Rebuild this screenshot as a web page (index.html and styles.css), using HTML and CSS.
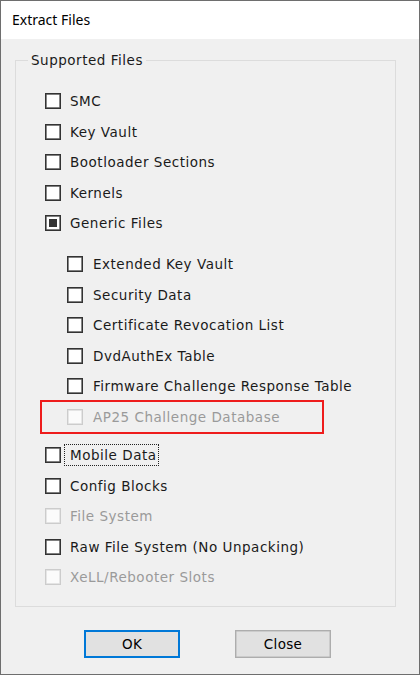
FILE: index.html
```html
<!DOCTYPE html>
<html>
<head>
<meta charset="utf-8">
<link rel="stylesheet" href="styles.css">
</head>
<body>
<div class="window">
  <div class="titlebar">Extract Files</div>
  <div class="content">
    <fieldset class="group">
      <legend>Supported Files</legend>
      <div class="row"><span class="box"></span><span class="label">SMC</span></div>
      <div class="row"><span class="box"></span><span class="label">Key Vault</span></div>
      <div class="row"><span class="box"></span><span class="label">Bootloader Sections</span></div>
      <div class="row"><span class="box"></span><span class="label">Kernels</span></div>
      <div class="row"><span class="box mixed"></span><span class="label">Generic Files</span></div>
      <div class="sub">
        <div class="row"><span class="box"></span><span class="label">Extended Key Vault</span></div>
        <div class="row"><span class="box"></span><span class="label">Security Data</span></div>
        <div class="row"><span class="box"></span><span class="label">Certificate Revocation List</span></div>
        <div class="row"><span class="box"></span><span class="label">DvdAuthEx Table</span></div>
        <div class="row"><span class="box"></span><span class="label">Firmware Challenge Response Table</span></div>
        <div class="highlight">
          <div class="row disabled"><span class="box"></span><span class="label">AP25 Challenge Database</span></div>
        </div>
      </div>
      <div class="row after"><span class="box"></span><span class="label focus">Mobile Data</span></div>
      <div class="row"><span class="box"></span><span class="label">Config Blocks</span></div>
      <div class="row disabled"><span class="box"></span><span class="label">File System</span></div>
      <div class="row"><span class="box"></span><span class="label">Raw File System (No Unpacking)</span></div>
      <div class="row disabled"><span class="box"></span><span class="label">XeLL/Rebooter Slots</span></div>
    </fieldset>
    <div class="buttons">
      <div class="btn default">OK</div>
      <div class="btn">Close</div>
    </div>
  </div>
</div>
</body>
</html>
```
FILE: styles.css
```css
html, body {
  margin: 0;
  padding: 0;
  background: #f0f0f0;
}
.window {
  width: 420px;
  height: 675px;
  box-sizing: border-box;
  border: 1px solid #6e6e6e;
  background: #f0f0f0;
  display: flex;
  flex-direction: column;
}
.titlebar {
  height: 38px;
  line-height: 38px;
  background: #ffffff;
  padding-left: 11px;
  font-family: "Noto Sans", sans-serif;
  font-size: 14px;
  color: #000;
}
.content {
  padding: 12px 0 0 14px;
  font-family: "DejaVu Sans", sans-serif;
  font-size: 13.5px;
  letter-spacing: 0.52px;
  color: #1a1a1a;
}
.group {
  margin: 0;
  width: 381px;
  height: 556px;
  box-sizing: border-box;
  border: 1px solid #dcdcdc;
  padding: 16.75px 0 0 29px;
}
.group legend {
  margin-left: -17px;
  padding: 0 3px 0 3px;
  line-height: 18px;
  height: 18px;
  color: #1a1a1a;
}
.row {
  height: 30.5px;
  display: flex;
  align-items: center;
}
.box {
  width: 16px;
  height: 16px;
  box-sizing: border-box;
  border: 1px solid #333333;
  box-shadow: inset 0 0 0 0.7px #555555;
  background: #ffffff;
  margin-right: 9px;
  flex: none;
  display: flex;
  align-items: center;
  justify-content: center;
}
.box.mixed::after {
  content: "";
  width: 8px;
  height: 8px;
  background: #333333;
}
.sub {
  margin-top: 10.5px;
  padding-left: 22px;
}
.sub .box {
  margin-right: 10px;
}
.highlight {
  margin: -1.25px 0 0 -27px;
  width: 284px;
  height: 34px;
  box-sizing: border-box;
  border: 2px solid #ee1c1c;
  padding: 0 0 0 25px;
  display: flex;
  align-items: center;
}
.highlight .row {
  height: 30px;
}
.disabled .label {
  color: #9a9a9a;
}
.disabled .box {
  border-color: #cccccc;
  box-shadow: inset 0 0 0 0.7px #dddddd;
  background: #fbfbfb;
}
.row.after {
  margin-top: 5.75px;
}
.focus {
  margin-left: -6px;
  padding: 0 1px 0 5px;
  border: 1px dotted #222;
  line-height: 20px;
}
.buttons {
  display: flex;
  gap: 55px;
  margin: 23px 0 0 69px;
}
.btn {
  width: 96px;
  height: 28px;
  box-sizing: border-box;
  border: 1px solid #adadad;
  box-shadow: inset 0 0 0 0.5px #b5b5b5;
  background: #e1e1e1;
  display: flex;
  align-items: center;
  justify-content: center;
  color: #000;
  letter-spacing: 0.3px;
}
.btn.default {
  border: 2px solid #0078d7;
  box-shadow: none;
}
```
